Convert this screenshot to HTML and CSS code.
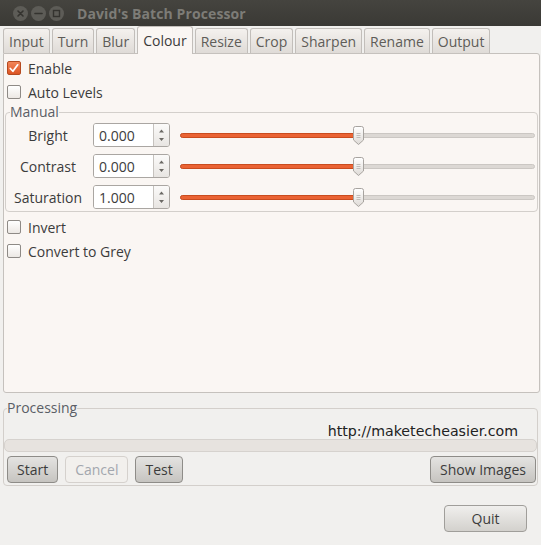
FILE: index.html
```html
<!DOCTYPE html>
<html>
<head>
<meta charset="utf-8">
<link rel="stylesheet" href="styles.css">
</head>
<body>
<div class="window">
  <div class="titlebar">
    <div class="wbtns">
      <span class="wbtn"><svg width="15" height="15" viewBox="0 0 15 15"><path d="M5 5 L10 10 M10 5 L5 10" stroke="#34332f" stroke-width="1.6" stroke-linecap="round"/></svg></span>
      <span class="wbtn"><svg width="15" height="15" viewBox="0 0 15 15"><path d="M4 7.5 H11" stroke="#34332f" stroke-width="1.6" stroke-linecap="round"/></svg></span>
      <span class="wbtn"><svg width="15" height="15" viewBox="0 0 15 15"><rect x="4.5" y="4.5" width="6" height="6" fill="none" stroke="#34332f" stroke-width="1.4"/></svg></span>
    </div>
    <div class="title">David's Batch Processor</div>
  </div>

  <div class="tabs">
    <div class="tab">Input</div>
    <div class="tab">Turn</div>
    <div class="tab">Blur</div>
    <div class="tab active">Colour</div>
    <div class="tab">Resize</div>
    <div class="tab">Crop</div>
    <div class="tab">Sharpen</div>
    <div class="tab">Rename</div>
    <div class="tab">Output</div>
  </div>

  <div class="panel">
    <label class="check-row"><span class="cb checked"><svg width="13" height="13" viewBox="0 0 13 13"><path d="M2.5 6.5 L5.3 9.5 L10.5 2.5" fill="none" stroke="#fff" stroke-width="1.9" stroke-linecap="round" stroke-linejoin="round"/></svg></span>Enable</label>
    <label class="check-row"><span class="cb"></span>Auto Levels</label>

    <fieldset class="frame manual">
      <legend>Manual</legend>
      <div class="adj-row">
        <div class="adj-label">Bright</div>
        <div class="spin"><div class="spin-entry">0.000</div><div class="spin-arrows"><svg width="15" height="22" viewBox="0 0 15 22"><path d="M5 8.5 L7.5 5.5 L10 8.5 Z M5 14 L7.5 17 L10 14 Z" fill="#6b6965"/></svg></div></div>
        <div class="slider"><div class="track"><div class="fill" style="width:50%"></div></div><div class="thumb" style="left:50%"><svg width="11" height="19" viewBox="0 0 11 19"><defs><linearGradient id="tg1" x1="0" y1="0" x2="0" y2="1"><stop offset="0" stop-color="#ffffff"/><stop offset="1" stop-color="#dedad6"/></linearGradient></defs><path d="M0.5 2.5 Q0.5 0.5 2.5 0.5 H8.5 Q10.5 0.5 10.5 2.5 V14 L5.5 18.5 L0.5 14 Z" fill="url(#tg1)" stroke="#a7a39f"/><path d="M3.5 7.5 H7.5 M3.5 9.5 H7.5 M3.5 11.5 H7.5" stroke="#b5b1ad" stroke-width="0.8"/></svg></div></div>
      </div>
      <div class="adj-row">
        <div class="adj-label">Contrast</div>
        <div class="spin"><div class="spin-entry">0.000</div><div class="spin-arrows"><svg width="15" height="22" viewBox="0 0 15 22"><path d="M5 8.5 L7.5 5.5 L10 8.5 Z M5 14 L7.5 17 L10 14 Z" fill="#6b6965"/></svg></div></div>
        <div class="slider"><div class="track"><div class="fill" style="width:50%"></div></div><div class="thumb" style="left:50%"><svg width="11" height="19" viewBox="0 0 11 19"><defs><linearGradient id="tg2" x1="0" y1="0" x2="0" y2="1"><stop offset="0" stop-color="#ffffff"/><stop offset="1" stop-color="#dedad6"/></linearGradient></defs><path d="M0.5 2.5 Q0.5 0.5 2.5 0.5 H8.5 Q10.5 0.5 10.5 2.5 V14 L5.5 18.5 L0.5 14 Z" fill="url(#tg2)" stroke="#a7a39f"/><path d="M3.5 7.5 H7.5 M3.5 9.5 H7.5 M3.5 11.5 H7.5" stroke="#b5b1ad" stroke-width="0.8"/></svg></div></div>
      </div>
      <div class="adj-row">
        <div class="adj-label">Saturation</div>
        <div class="spin"><div class="spin-entry">1.000</div><div class="spin-arrows"><svg width="15" height="22" viewBox="0 0 15 22"><path d="M5 8.5 L7.5 5.5 L10 8.5 Z M5 14 L7.5 17 L10 14 Z" fill="#6b6965"/></svg></div></div>
        <div class="slider"><div class="track"><div class="fill" style="width:50%"></div></div><div class="thumb" style="left:50%"><svg width="11" height="19" viewBox="0 0 11 19"><defs><linearGradient id="tg3" x1="0" y1="0" x2="0" y2="1"><stop offset="0" stop-color="#ffffff"/><stop offset="1" stop-color="#dedad6"/></linearGradient></defs><path d="M0.5 2.5 Q0.5 0.5 2.5 0.5 H8.5 Q10.5 0.5 10.5 2.5 V14 L5.5 18.5 L0.5 14 Z" fill="url(#tg3)" stroke="#a7a39f"/><path d="M3.5 7.5 H7.5 M3.5 9.5 H7.5 M3.5 11.5 H7.5" stroke="#b5b1ad" stroke-width="0.8"/></svg></div></div>
      </div>
    </fieldset>

    <label class="check-row after-frame"><span class="cb"></span>Invert</label>
    <label class="check-row"><span class="cb"></span>Convert to Grey</label>
  </div>

  <fieldset class="frame processing">
    <legend>Processing</legend>
    <div class="url">http://maketecheasier.com</div>
    <div class="progress"></div>
    <div class="btn-row">
      <button class="btn dark">Start</button>
      <button class="btn disabled">Cancel</button>
      <button class="btn dark">Test</button>
      <div class="spacer"></div>
      <button class="btn dark">Show Images</button>
    </div>
  </fieldset>

  <div class="quit-row">
    <button class="btn quit">Quit</button>
  </div>
</div>
</body>
</html>
```

FILE: styles.css
```css
* { box-sizing: border-box; }
html, body {
  margin: 0;
  padding: 0;
}
body {
  width: 541px;
  height: 545px;
  overflow: hidden;
  background: #f1f0ee;
  font-family: "Open Sans", "DejaVu Sans", sans-serif;
  font-size: 14px;
  color: #3c3c3c;
}
.window {
  display: flex;
  flex-direction: column;
  height: 545px;
}
.titlebar {
  height: 26px;
  background: linear-gradient(#45443f, #3a3935);
  display: flex;
  align-items: center;
  padding-left: 13px;
}
.wbtns {
  display: flex;
  gap: 3px;
}
.wbtn {
  width: 15px;
  height: 15px;
  border-radius: 50%;
  background: #5d5c57;
  display: flex;
}
.title {
  margin-left: 13px;
  font-weight: bold;
  font-size: 14px;
  color: #7d7c77;
  letter-spacing: 0.1px;
}

.tabs {
  display: flex;
  align-items: flex-end;
  gap: 2px;
  padding-left: 3px;
  height: 27px;
}
.tab {
  height: 25px;
  padding: 0 5px;
  display: flex;
  align-items: center;
  justify-content: center;
  border: 1px solid #c2beba;
  border-bottom: none;
  border-radius: 3px 3px 0 0;
  background: linear-gradient(#f4f1ee, #dfdbd7);
  color: #5e5c58;
}
.tab.active {
  height: 28px;
  margin-bottom: -1px;
  padding: 0 5px 1px;
  background: #faf6f3;
  color: #3c3c3c;
  position: relative;
  z-index: 1;
}

.panel {
  margin: 0 1px 0 3px;
  height: 340px;
  border: 1px solid #c5c1bd;
  border-radius: 0 3px 3px 3px;
  background: #faf6f3;
  padding: 2px 1px 0 3px;
  display: flex;
  flex-direction: column;
}
.check-row {
  height: 24px;
  display: flex;
  align-items: center;
  gap: 7px;
}
.after-frame { margin-top: 3px; }
.cb {
  width: 14px;
  height: 14px;
  border: 1px solid #8e8a86;
  border-radius: 2px;
  background: linear-gradient(#ffffff, #ece8e4);
  display: flex;
  align-items: center;
  justify-content: center;
}
.cb.checked {
  border-color: #b54a20;
  background: linear-gradient(#f2865a, #dc5423);
}

.frame {
  margin: 0;
  border: 1px solid #d3cfcb;
  border-radius: 4px;
  min-width: 0;
}
.frame legend {
  padding: 0;
  margin-left: 4px;
  line-height: 16px;
  color: #5a5e66;
}
.manual {
  margin-left: -2px;
  padding: 3px 0 2px 0;
  display: flex;
  flex-direction: column;
  gap: 7px;
}
.adj-row {
  height: 24px;
  display: flex;
  align-items: center;
}
.adj-label {
  width: 83px;
  text-align: center;
  padding-left: 1px;
}
.spin {
  margin-left: 4px;
  width: 77px;
  height: 24px;
  display: flex;
  border: 1px solid #aaa6a2;
  border-radius: 3px;
  overflow: hidden;
}
.spin-entry {
  width: 61px;
  background: #ffffff;
  padding-left: 5px;
  display: flex;
  align-items: center;
  border-right: 1px solid #c6c2be;
}
.spin-arrows {
  flex: 1;
  background: linear-gradient(#fbfaf9, #e8e5e2);
  display: flex;
}
.slider {
  margin-left: 10px;
  margin-right: 2px;
  flex: 1;
  height: 24px;
  position: relative;
  display: flex;
  align-items: center;
}
.track {
  width: 100%;
  height: 5px;
  border-radius: 3px;
  background: #dcd8d4;
  border: 1px solid #cbc7c3;
  position: relative;
}
.fill {
  position: absolute;
  left: -1px;
  top: -1px;
  height: 5px;
  border-radius: 3px;
  background: #ea6333;
  border: 1px solid #c94c1f;
}
.thumb {
  position: absolute;
  top: 3px;
  margin-left: -5px;
  width: 11px;
  height: 19px;
  display: flex;
}

.processing {
  margin: 7px 3px 0 3px;
  padding: 7px 0 2px 0;
  display: flex;
  flex-direction: column;
}
.processing legend {
  margin-left: 3px;
}
.url {
  font-family: "DejaVu Sans", sans-serif;
  font-size: 14.2px;
  line-height: 16px;
  text-align: right;
  padding-right: 19px;
  color: #222;
}
.progress {
  height: 13px;
  border: 1px solid #d6d2ce;
  border-radius: 5px;
  background: #e7e3df;
}
.btn-row {
  margin-top: 4px;
  display: flex;
  padding: 0 1px 0 3px;
  gap: 7px;
}
.spacer { flex: 1; }
.btn {
  height: 27px;
  padding: 0 9px;
  font-family: "Open Sans", "DejaVu Sans", sans-serif;
  font-size: 14px;
  color: #3c3c3c;
  border: 1px solid #8e8c88;
  border-radius: 4px;
  background: linear-gradient(#f0efed, #d3d1cd);
}
.btn.dark {
  background: linear-gradient(#e4e3e1, #c6c4c0);
}
.btn.disabled {
  color: #a3a7ae;
  border-color: #d5d1cd;
  background: #f2f0ed;
}
.quit-row {
  display: flex;
  justify-content: flex-end;
  padding-right: 14px;
  margin-top: 19px;
}
.btn.quit {
  width: 83px;
  border-color: #a09e9a;
}
```
